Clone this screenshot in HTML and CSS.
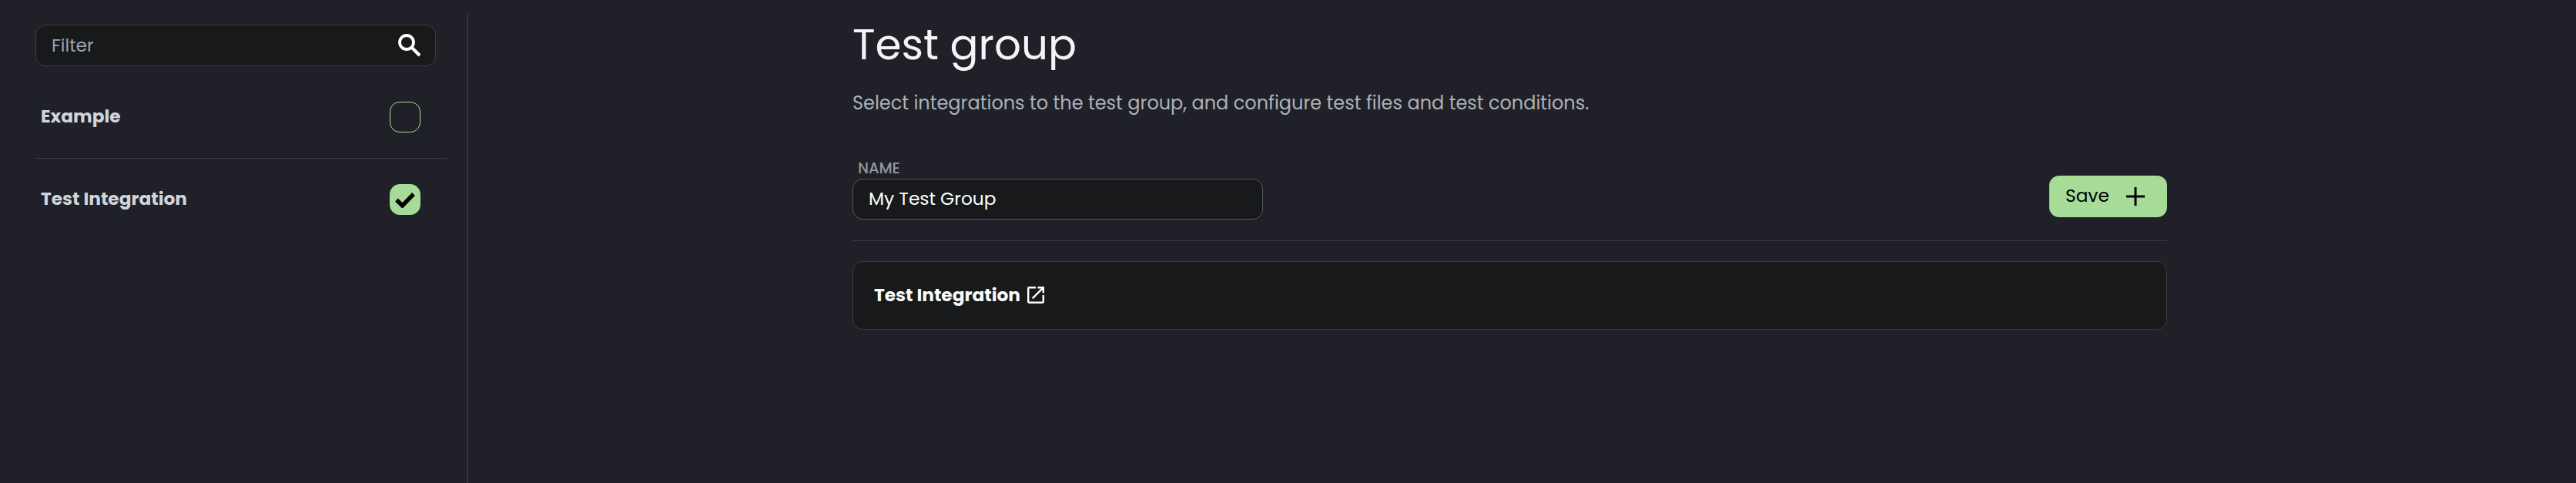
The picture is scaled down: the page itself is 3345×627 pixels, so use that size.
FILE: index.html
```html
<!DOCTYPE html>
<html lang="en">
<head>
<meta charset="utf-8">
<title>Test group</title>
<link rel="stylesheet" href="styles.css">
</head>
<body>
<div class="app">
  <aside class="sidebar">
    <div class="filter">
      <span class="filter-text">Filter</span>
      <svg class="search-icon" viewBox="0 0 30 30"><circle cx="11" cy="11" r="9" fill="none" stroke="currentColor" stroke-width="3.8"/><path d="M17.5 17.5 28 28" stroke="currentColor" stroke-width="4.2" fill="none"/></svg>
    </div>
    <ul class="list">
      <li class="item"><span class="item-name">Example</span><span class="checkbox"></span></li>
      <li class="item"><span class="item-name">Test Integration</span><span class="checkbox checked"><svg class="check-icon" viewBox="0 0 26 21"><path d="M2 10.5 9.5 18 24 3" fill="none" stroke="currentColor" stroke-width="5.4"/></svg></span></li>
    </ul>
  </aside>
  <main class="main">
    <div class="content">
      <h1 class="title">Test group</h1>
      <p class="subtitle">Select integrations to the test group, and configure test files and test conditions.</p>
      <div class="toolbar">
        <div class="field">
          <label class="label">NAME</label>
          <div class="input">My Test Group</div>
        </div>
        <button class="save"><span class="save-text">Save</span><svg class="plus-icon" viewBox="0 0 24 24"><path d="M12 0v24M0 12h24" stroke="currentColor" stroke-width="3" fill="none"/></svg></button>
      </div>
      <section class="card">
        <span class="card-name">Test Integration</span>
        <svg class="open-icon" viewBox="3 3 18 18"><path fill="currentColor" d="M19 19H5V5h7V3H5a2 2 0 0 0-2 2v14a2 2 0 0 0 2 2h14c1.1 0 2-.9 2-2v-7h-2v7zM14 3v2h3.59l-9.83 9.83 1.41 1.41L19 6.41V10h2V3h-7z"/></svg>
      </section>
    </div>
  </main>
</div>
</body>
</html>
```
FILE: styles.css
```css
* { box-sizing: border-box; }
body {
  margin: 0;
  background: #202128;
  color: #fff;
  font-family: Poppins, Inter, sans-serif;
  font-size: 23.25px;
  line-height: 32px;
}
svg { display: block; flex: none; }
.app { display: flex; height: 627px; overflow: hidden; }
.sidebar {
  width: 608px;
  margin-top: 19px;
  padding: 13px 26px 0 46px;
  border-right: 2px solid #37383d;
}
.filter {
  display: flex;
  align-items: center;
  justify-content: space-between;
  width: 520px;
  height: 54px;
  padding: 0 18px 0 20px;
  border: 1px solid #3b3d3f;
  border-radius: 13px;
  background: #17191a;
}
.filter-text { color: #9ca3af; }
.search-icon { width: 30px; height: 30px; }
.list { list-style: none; margin: 12px 0 0; padding: 0; }
.item {
  display: flex;
  align-items: center;
  justify-content: space-between;
  height: 107px;
  padding: 0 34px 0 7px;
}
.item + .item { border-top: 1px solid #3b3c40; }
.item-name { padding-bottom: 2px; color: #d1d5db; font-weight: 700; }
.checkbox {
  display: flex;
  align-items: center;
  justify-content: center;
  width: 40px;
  height: 40px;
  border: 1px solid #a6dc97;
  border-radius: 13px;
}
.checked { background: #a6dc97; color: #000; }
.check-icon { width: 26px; height: 21px; }
.main { flex: 1; padding-left: 499px; }
.content { width: 1707px; padding-top: 24px; }
.title { margin: 0; color: #f3f4f6; font-size: 54.7px; font-weight: 400; line-height: 68px; }
.subtitle { margin: 26px 0 0; color: #adb1b8; font-size: 24px; }
.toolbar {
  display: flex;
  align-items: flex-end;
  justify-content: space-between;
  margin-top: 54px;
  height: 109px;
  padding-bottom: 27px;
  border-bottom: 1px solid #3b3c40;
}
.label { display: block; height: 28px; padding-left: 7px; color: #96989d; font-size: 19.4px; font-weight: 500; line-height: 29px; }
.input {
  width: 533px;
  height: 53px;
  padding: 9px 20px;
  border: 1px solid #55585a;
  border-radius: 13px;
  background: #17191a;
}
.save {
  display: flex;
  align-items: center;
  justify-content: space-between;
  width: 153px;
  height: 54px;
  margin-bottom: 3px;
  padding: 0 29px 0 21px;
  border: 0;
  border-radius: 13px;
  background: #a6dc97;
  color: #000;
  font: inherit;
}
.save-text { padding-bottom: 2px; }
.plus-icon { width: 24px; height: 24px; }
.card {
  display: flex;
  align-items: center;
  height: 89px;
  margin-top: 26px;
  padding: 0 27px;
  border: 1px solid #3b3d3f;
  border-radius: 13px;
  background: #17191a;
}
.card-name { padding-bottom: 2px; color: #f9fafb; font-weight: 700; }
.open-icon { width: 22px; height: 22px; margin: 0 0 2px 9px; }
```
